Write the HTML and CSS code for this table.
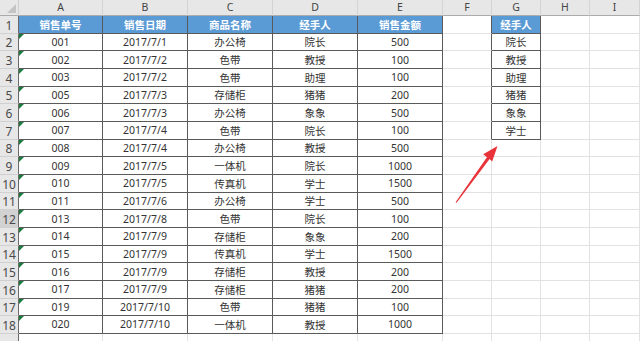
FILE: index.html
```html
<!DOCTYPE html>
<html lang="zh-CN">
<head>
<meta charset="utf-8">
<title>销售数据</title>
<link rel="stylesheet" href="styles.css">
</head>
<body>
<div class="sheet">
  <div class="row colhead">
    <div class="corner"><span class="corner-tri"></span></div>
    <div class="ch">A</div><div class="ch">B</div><div class="ch">C</div><div class="ch">D</div><div class="ch">E</div><div class="ch">F</div><div class="ch">G</div><div class="ch">H</div><div class="ch">I</div>
  </div>
  <div class="row">
    <div class="rh">1</div>
    <div class="c t th">销售单号</div><div class="c t th">销售日期</div><div class="c t th">商品名称</div><div class="c t th">经手人</div><div class="c t th">销售金额</div>
    <div class="c fl"></div><div class="c t th">经手人</div><div class="c"></div><div class="c"></div>
  </div>
  <div class="row">
    <div class="rh">2</div>
    <div class="c t tri">001</div><div class="c t">2017/7/1</div><div class="c t">办公椅</div><div class="c t">院长</div><div class="c t">500</div>
    <div class="c fl"></div><div class="c t">院长</div><div class="c"></div><div class="c"></div>
  </div>
  <div class="row">
    <div class="rh">3</div>
    <div class="c t tri">002</div><div class="c t">2017/7/2</div><div class="c t">色带</div><div class="c t">教授</div><div class="c t">100</div>
    <div class="c fl"></div><div class="c t">教授</div><div class="c"></div><div class="c"></div>
  </div>
  <div class="row">
    <div class="rh">4</div>
    <div class="c t tri">003</div><div class="c t">2017/7/2</div><div class="c t">色带</div><div class="c t">助理</div><div class="c t">100</div>
    <div class="c fl"></div><div class="c t">助理</div><div class="c"></div><div class="c"></div>
  </div>
  <div class="row">
    <div class="rh">5</div>
    <div class="c t tri">005</div><div class="c t">2017/7/3</div><div class="c t">存储柜</div><div class="c t">猪猪</div><div class="c t">200</div>
    <div class="c fl"></div><div class="c t">猪猪</div><div class="c"></div><div class="c"></div>
  </div>
  <div class="row">
    <div class="rh">6</div>
    <div class="c t tri">006</div><div class="c t">2017/7/3</div><div class="c t">办公椅</div><div class="c t">象象</div><div class="c t">500</div>
    <div class="c fl"></div><div class="c t">象象</div><div class="c"></div><div class="c"></div>
  </div>
  <div class="row">
    <div class="rh">7</div>
    <div class="c t tri">007</div><div class="c t">2017/7/4</div><div class="c t">色带</div><div class="c t">院长</div><div class="c t">100</div>
    <div class="c fl"></div><div class="c t">学士</div><div class="c"></div><div class="c"></div>
  </div>
  <div class="row">
    <div class="rh">8</div>
    <div class="c t tri">008</div><div class="c t">2017/7/4</div><div class="c t">办公椅</div><div class="c t">教授</div><div class="c t">500</div>
    <div class="c"></div><div class="c"></div><div class="c"></div><div class="c"></div>
  </div>
  <div class="row">
    <div class="rh">9</div>
    <div class="c t tri">009</div><div class="c t">2017/7/5</div><div class="c t">一体机</div><div class="c t">院长</div><div class="c t">1000</div>
    <div class="c"></div><div class="c"></div><div class="c"></div><div class="c"></div>
  </div>
  <div class="row">
    <div class="rh">10</div>
    <div class="c t tri">010</div><div class="c t">2017/7/5</div><div class="c t">传真机</div><div class="c t">学士</div><div class="c t">1500</div>
    <div class="c"></div><div class="c"></div><div class="c"></div><div class="c"></div>
  </div>
  <div class="row">
    <div class="rh">11</div>
    <div class="c t tri">011</div><div class="c t">2017/7/6</div><div class="c t">办公椅</div><div class="c t">学士</div><div class="c t">500</div>
    <div class="c"></div><div class="c"></div><div class="c"></div><div class="c"></div>
  </div>
  <div class="row">
    <div class="rh rh-active">12</div>
    <div class="c t tri">013</div><div class="c t">2017/7/8</div><div class="c t">色带</div><div class="c t">院长</div><div class="c t">100</div>
    <div class="c"></div><div class="c"></div><div class="c"></div><div class="c"></div>
  </div>
  <div class="row">
    <div class="rh">13</div>
    <div class="c t tri">014</div><div class="c t">2017/7/9</div><div class="c t">存储柜</div><div class="c t">象象</div><div class="c t">200</div>
    <div class="c"></div><div class="c"></div><div class="c"></div><div class="c"></div>
  </div>
  <div class="row">
    <div class="rh">14</div>
    <div class="c t tri">015</div><div class="c t">2017/7/9</div><div class="c t">传真机</div><div class="c t">学士</div><div class="c t">1500</div>
    <div class="c"></div><div class="c"></div><div class="c"></div><div class="c"></div>
  </div>
  <div class="row">
    <div class="rh">15</div>
    <div class="c t tri">016</div><div class="c t">2017/7/9</div><div class="c t">存储柜</div><div class="c t">教授</div><div class="c t">200</div>
    <div class="c"></div><div class="c"></div><div class="c"></div><div class="c"></div>
  </div>
  <div class="row">
    <div class="rh">16</div>
    <div class="c t tri">017</div><div class="c t">2017/7/9</div><div class="c t">存储柜</div><div class="c t">猪猪</div><div class="c t">200</div>
    <div class="c"></div><div class="c"></div><div class="c"></div><div class="c"></div>
  </div>
  <div class="row">
    <div class="rh">17</div>
    <div class="c t tri">019</div><div class="c t">2017/7/10</div><div class="c t">色带</div><div class="c t">猪猪</div><div class="c t">100</div>
    <div class="c"></div><div class="c"></div><div class="c"></div><div class="c"></div>
  </div>
  <div class="row">
    <div class="rh">18</div>
    <div class="c t tri">020</div><div class="c t">2017/7/10</div><div class="c t">一体机</div><div class="c t">教授</div><div class="c t">1000</div>
    <div class="c"></div><div class="c"></div><div class="c"></div><div class="c"></div>
  </div>
  <div class="row">
    <div class="rh"></div>
    <div class="c"></div><div class="c"></div><div class="c"></div><div class="c"></div><div class="c"></div>
    <div class="c"></div><div class="c"></div><div class="c"></div><div class="c"></div>
  </div>
  <svg class="arrow" width="640" height="341" viewBox="0 0 640 341" aria-hidden="true">
    <polygon points="455.6,202.2 486.9,157.2 483.2,154.2 497.5,146 492.2,161.6 489.6,159.1 456.6,202.8" fill="#e8333a"/>
  </svg>
</div>
</body>
</html>
```
FILE: styles.css
```css
html, body {
  margin: 0;
  padding: 0;
  background: #ffffff;
  overflow: hidden;
}

.sheet {
  position: relative;
  width: 640px;
  height: 341px;
  overflow: hidden;
  display: flex;
  flex-direction: column;
  font-family: "Noto Sans", "Noto Sans CJK SC", sans-serif;
  color: #333333;
}

.row {
  display: grid;
  grid-template-columns: 19px 84px 85px 85px 85px 85px 49px 49px 49px 50px;
  height: 17.667px;
  flex: none;
}

.colhead {
  height: 16px;
  background: #e7e7e7;
}

.corner {
  position: relative;
  box-sizing: border-box;
  border-right: 1px solid #cfcfcf;
  border-bottom: 1px solid #ababab;
  background: #e7e7e7;
}

.corner-tri {
  position: absolute;
  right: 2px;
  bottom: 2px;
  width: 0;
  height: 0;
  border-left: 9px solid transparent;
  border-bottom: 9px solid #c4c4c4;
}

.ch {
  box-sizing: border-box;
  border-right: 1px solid #d4d4d4;
  border-bottom: 1px solid #ababab;
  font-size: 10.5px;
  line-height: 15px;
  text-align: center;
  color: #444444;
}

.rh {
  box-sizing: border-box;
  background: #e7e7e7;
  border-right: 1px solid #6a6a6a;
  border-bottom: 1px solid #d0d0d0;
  font-size: 12px;
  color: #4a4a4a;
  display: flex;
  align-items: flex-end;
  justify-content: center;
  line-height: 12px;
  padding-bottom: 1px;
}

.rh-active {
  background: #d2d2d2;
}

.c {
  position: relative;
  box-sizing: border-box;
  border-right: 1px solid #e2e2e2;
  border-bottom: 1px solid #e2e2e2;
  display: flex;
  align-items: center;
  justify-content: center;
  font-size: 10.5px;
  white-space: nowrap;
}

.t {
  border-right-color: #5a5a5a;
  border-bottom-color: #5a5a5a;
}

.fl {
  border-right-color: #5a5a5a;
}

.th {
  background: #5b9bd5;
  color: #ffffff;
  font-weight: bold;
}

.tri::before {
  content: "";
  position: absolute;
  left: 0;
  top: 0;
  width: 0;
  height: 0;
  border-top: 5px solid #1f7a3f;
  border-right: 5px solid transparent;
}

.arrow {
  position: absolute;
  left: 0;
  top: 0;
  pointer-events: none;
}
```
